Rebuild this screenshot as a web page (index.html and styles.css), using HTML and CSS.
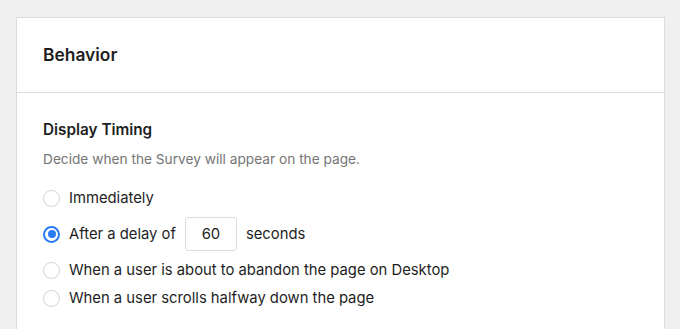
FILE: index.html
```html
<!DOCTYPE html>
<html>
<head>
<meta charset="utf-8">
<link rel="stylesheet" href="styles.css">
</head>
<body>
<div class="card">
  <div class="card-header">
    <h2 class="card-title">Behavior</h2>
  </div>
  <div class="card-body">
    <h3 class="section-title">Display Timing</h3>
    <p class="section-desc">Decide when the Survey will appear on the page.</p>
    <ul class="options">
      <li class="option"><span class="radio"></span><span class="label">Immediately</span></li>
      <li class="option option-delay"><span class="radio checked"></span><span class="label">After a delay of</span><span class="num-input">60</span><span class="label">seconds</span></li>
      <li class="option"><span class="radio"></span><span class="label">When a user is about to abandon the page on Desktop</span></li>
      <li class="option"><span class="radio"></span><span class="label">When a user scrolls halfway down the page</span></li>
    </ul>
  </div>
</div>
</body>
</html>
```

FILE: styles.css
```css
html, body {
  margin: 0;
  padding: 0;
  background: #f0f0f0;
  font-family: Inter, "Liberation Sans", sans-serif;
  color: #1e1e1e;
}
body {
  padding: 17px 15px 0 16px;
}
.card {
  background: #fff;
  border: 1px solid #dcdcde;
  border-bottom: none;
  height: 320px;
  box-sizing: border-box;
}
.card-header {
  height: 74px;
  border-bottom: 1px solid #dcdcde;
  display: flex;
  align-items: center;
  padding: 0 26px;
}
.card-title {
  margin: 0;
  font-size: 17.4px;
  font-weight: 600;
  padding-bottom: 1px;
}
.card-body {
  padding: 27px 26px 0;
}
.section-title {
  margin: 0;
  font-size: 15.3px;
  font-weight: 600;
  line-height: 20px;
}
.section-desc {
  margin: 9px 0 0;
  font-size: 13.7px;
  line-height: 20px;
  color: #757575;
}
.options {
  list-style: none;
  margin: 15px 0 0;
  padding: 0;
}
.option {
  display: flex;
  align-items: center;
  height: 28px;
  font-size: 14.8px;
}
.option-delay {
  height: 44px;
}
.radio {
  width: 17px;
  height: 17px;
  border: 1.5px solid #cdd2d8;
  border-radius: 50%;
  box-sizing: border-box;
  margin-right: 9px;
  flex: none;
  position: relative;
}
.radio.checked {
  border: 2px solid #2b7bf3;
}
.radio.checked::after {
  content: "";
  position: absolute;
  left: 2.5px;
  top: 2.5px;
  width: 8px;
  height: 8px;
  border-radius: 50%;
  background: #2b7bf3;
}
.num-input {
  display: inline-flex;
  align-items: center;
  justify-content: center;
  width: 52px;
  height: 34px;
  box-sizing: border-box;
  border: 1px solid #dcdcde;
  border-radius: 3px;
  margin: 0 9px 0 9px;
  font-size: 14.8px;
}
```
